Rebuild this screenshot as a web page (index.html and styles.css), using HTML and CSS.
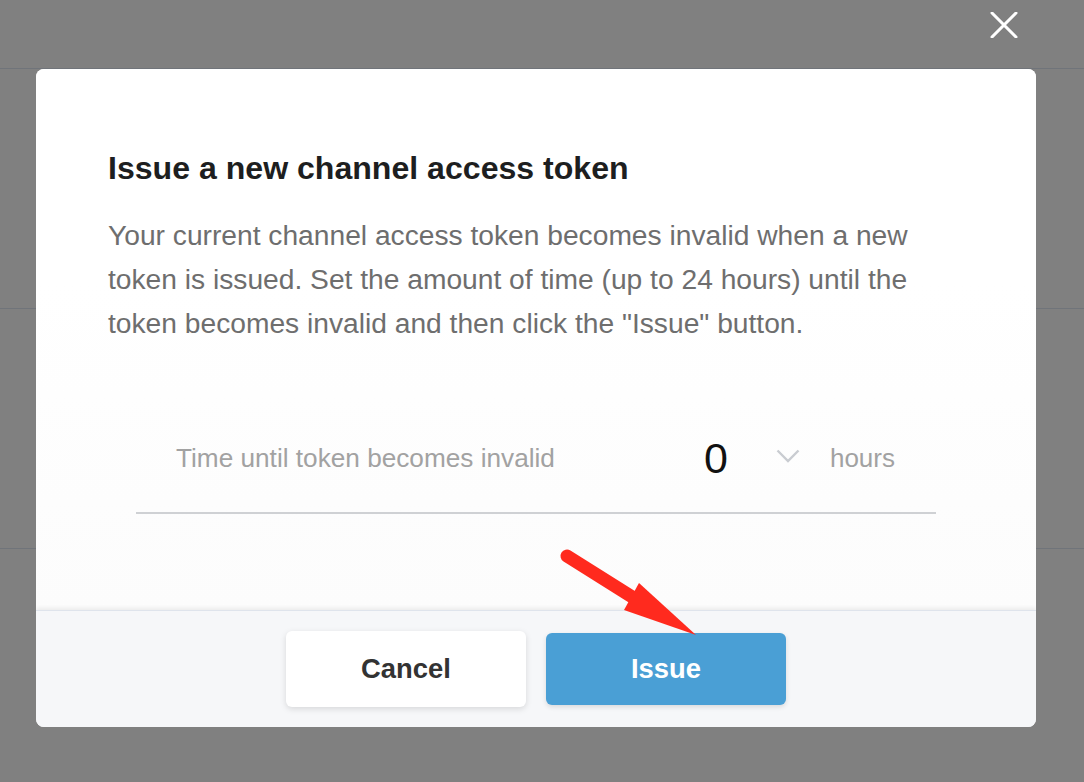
FILE: index.html
```html
<!DOCTYPE html>
<html lang="en">
<head>
<meta charset="utf-8">
<title>Issue a new channel access token</title>
<link rel="stylesheet" href="styles.css">
</head>
<body>
<div class="page">
  <div class="bg-row bg-row-first"></div>
  <div class="bg-row"></div>
  <div class="bg-row"></div>
  <div class="bg-row bg-row-last"></div>
</div>

<button class="close" aria-label="Close">
  <svg width="28" height="26" viewBox="0 0 28 26"><path d="M2 1 L26 25 M26 1 L2 25" stroke="#fff" stroke-width="3" stroke-linecap="round" fill="none"/></svg>
</button>

<div class="modal">
  <div class="modal-body">
    <h2 class="title">Issue a new channel access token</h2>
    <p class="desc">Your current channel access token becomes invalid when a new token is issued. Set the amount of time (up to 24 hours) until the token becomes invalid and then click the "Issue" button.</p>
    <div class="field">
      <span class="field-label">Time until token becomes invalid</span>
      <div class="field-value">
        <span class="num">0</span>
        <svg class="chev" width="24" height="14" viewBox="0 0 24 14"><path d="M1.5 1.5 L12 12 L22.5 1.5" stroke="#c9ccd1" stroke-width="2.4" fill="none"/></svg>
        <span class="unit">hours</span>
      </div>
    </div>
  </div>
  <div class="modal-footer">
    <button class="btn btn-cancel">Cancel</button>
    <button class="btn btn-issue">Issue</button>
  </div>
</div>

<svg class="arrow" width="150" height="100" viewBox="0 0 150 100">
  <line x1="12" y1="11" x2="82" y2="55" stroke="#ff2a1e" stroke-width="13" stroke-linecap="round"/>
  <polygon points="84,38 69,65 141,90" fill="#ff2a1e"/>
</svg>
</body>
</html>
```

FILE: styles.css
```css
html, body {
  margin: 0;
  padding: 0;
}
body {
  width: 1084px;
  height: 782px;
  background: #808080;
  font-family: "Liberation Sans", Arial, Helvetica, sans-serif;
  overflow: hidden;
  position: relative;
}
.page {
  display: flex;
  flex-direction: column;
}
.bg-row {
  height: 239px;
  border-bottom: 1px solid #70747a;
}
.bg-row-first {
  height: 68px;
}
.bg-row-last {
  border-bottom: none;
}
.close {
  position: absolute;
  left: 990px;
  top: 12px;
  width: 28px;
  height: 26px;
  padding: 0;
  border: none;
  background: transparent;
  display: flex;
}
.modal {
  position: absolute;
  left: 36px;
  top: 69px;
  width: 1000px;
  height: 658px;
  background: #fff;
  border-radius: 8px;
  display: flex;
  flex-direction: column;
  overflow: hidden;
}
.modal-body {
  flex: 1;
  padding: 79px 72px 0 72px;
  background: linear-gradient(#ffffff 40%, #fcfcfc);
}
.title {
  margin: 0;
  font-size: 32.1px;
  line-height: 40px;
  font-weight: bold;
  color: #1d1e20;
}
.desc {
  margin: 25px 0 0 0;
  font-size: 28.2px;
  line-height: 44px;
  color: #6e6e6e;
}
.field {
  margin: 59px 28px 0 28px;
  height: 108px;
  border-bottom: 2px solid #cfd1d4;
  display: flex;
  align-items: center;
  justify-content: space-between;
  padding: 0 41px 0 40px;
}
.field-label {
  font-size: 26.2px;
  color: #a2a2a2;
}
.field-value {
  display: flex;
  align-items: center;
}
.num {
  font-size: 43px;
  color: #111;
  line-height: 1;
}
.chev {
  margin-left: 48px;
  margin-top: -4px;
}
.unit {
  margin-left: 30px;
  font-size: 26px;
  color: #a2a2a2;
}
.modal-footer {
  height: 116px;
  background: #f6f7f9;
  border-top: 1px solid #dfe4ec;
  box-shadow: 0 -2px 4px rgba(0, 0, 0, 0.07);
  display: flex;
  align-items: center;
  justify-content: center;
  gap: 20px;
  position: relative;
}
.btn {
  width: 240px;
  border: none;
  border-radius: 6px;
  font-family: "Liberation Sans", Arial, Helvetica, sans-serif;
  font-size: 27.4px;
  font-weight: bold;
  padding: 0;
}
.btn-cancel {
  height: 76px;
  background: #fff;
  color: #333;
  box-shadow: 0 2px 6px rgba(0, 0, 0, 0.13);
}
.btn-issue {
  height: 72px;
  background: #4a9fd5;
  color: #fff;
  box-shadow: 0 2px 5px rgba(0, 0, 0, 0.12);
}
.arrow {
  position: absolute;
  left: 555px;
  top: 545px;
}
```
